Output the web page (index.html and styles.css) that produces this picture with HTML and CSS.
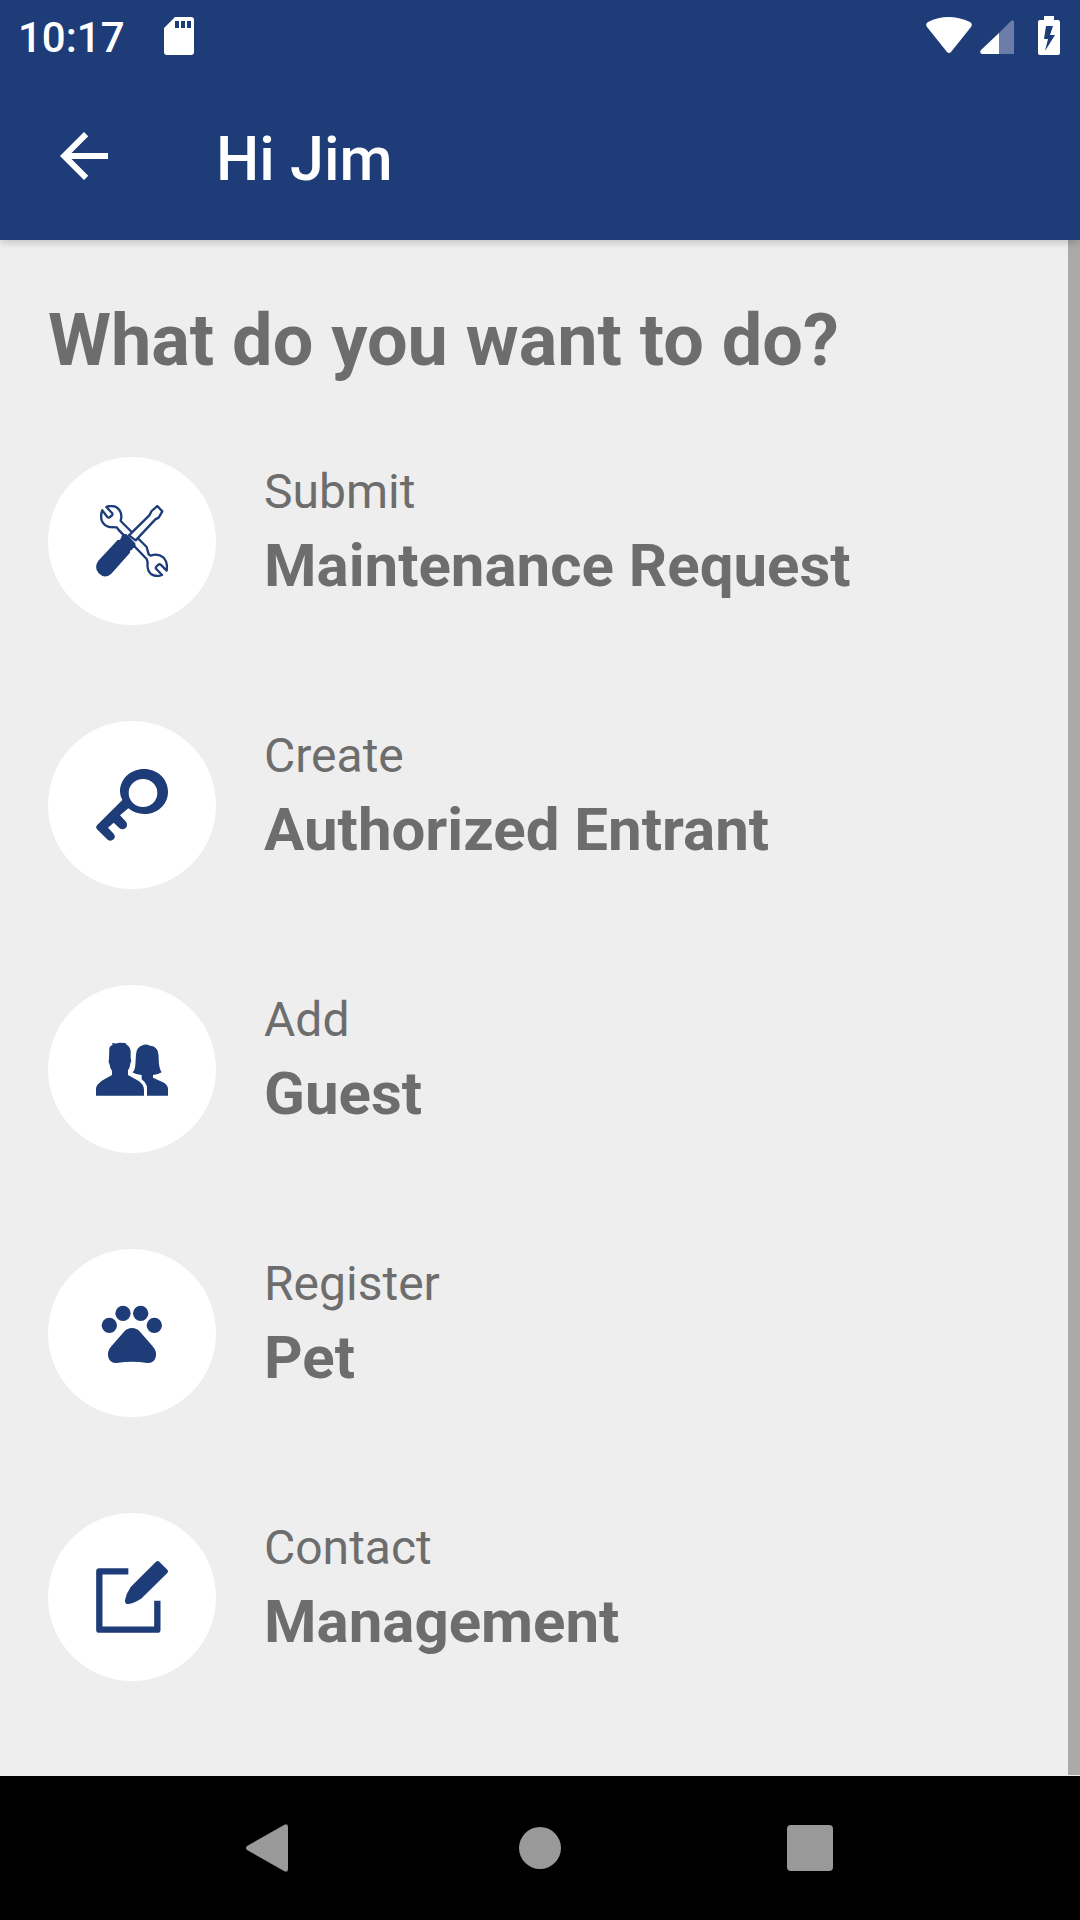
FILE: index.html
```html
<!DOCTYPE html>
<html lang="en">
<head>
<meta charset="utf-8">
<meta name="viewport" content="width=device-width, initial-scale=1">
<title>Hi Jim</title>
<link rel="stylesheet" href="styles.css">
</head>
<body>
<div class="status-bar">
  <time class="clock">10:17</time>
  <svg class="sd-card" width="32" height="40" viewBox="0 0 32 40" aria-hidden="true"><path fill="#fff" fill-rule="evenodd" d="M12 1H28Q31 1 31 4V36Q31 39 28 39H4Q1 39 1 36V12ZM12 5V12H16V5ZM18 5V12H22V5ZM24 5V12H28V5Z"/></svg>
  <div class="status-icons">
    <svg width="46" height="40" viewBox="0 0 46 40" aria-hidden="true"><path fill="#fff" d="M1 11Q-1 8 2 6Q22-4 44 6Q47 8 45 11L25 36Q23 38 21 36Z"/></svg>
    <svg class="signal" width="34" height="40" viewBox="0 0 34 40" aria-hidden="true"><path fill="#fff" d="M19 17V38H2Q-1 37 1 34Z"/><path fill="#6b7da8" d="M19 17L31 5Q34 3 34 6V38H19Z"/></svg>
    <svg class="battery" width="22" height="40" viewBox="0 0 22 40" aria-hidden="true"><path fill="#fff" fill-rule="evenodd" d="M6 0H16V4H20Q22 4 22 6V37Q22 39 20 39H2Q0 39 0 37V6Q0 4 2 4H6ZM8 10L6 23H10L7 35L17 19H12L15 10Z"/></svg>
  </div>
</div>
<header class="app-bar">
  <button class="back" type="button" aria-label="Back"><svg width="72" height="72" viewBox="0 0 24 24" aria-hidden="true"><path fill="#fff" d="M20 11H7.83l5.59-5.59L12 4l-8 8 8 8 1.41-1.41L7.83 13H20v-2z"/></svg></button>
  <h1 class="app-title">Hi Jim</h1>
</header>
<main class="content">
  <h2 class="question">What do you want to do?</h2>
  <nav class="actions" aria-label="Actions">
    <a class="action" href="#maintenance">
      <span class="disc"><svg class="icon" viewBox="0 0 216 216" aria-hidden="true">
        <g fill="#fff" stroke="#1e3c78" stroke-width="7" stroke-linejoin="round">
          <path d="M19 16L34 36Q38 40 42 36L48 31Q51 28 48 24L31 6Q45 0 60 6Q77 17 76 37L74 48L152 126L158 148L164 152Q186 144 203 158Q216 173 212 197L194 179Q190 176 186 180L181 185Q178 189 181 192L198 210Q180 217 166 208Q152 197 155 173L152 162L70 77L62 67L41 66Q24 63 17 46Q13 30 19 16Z"/>
          <path d="M99 91L160 31L167 18L184 3L199 19L188 38L178 43L119 106Z"/>
        </g>
        <path fill="#1e3c78" d="M79 88L91 87L118 115L119 128L111 129L108 135L103 136L102 143L46 206Q27 223 8 205Q-7 187 7 167L65 105L72 104L75 99Z"/>
      </svg></span>
      <span class="label"><span class="verb">Submit</span><strong class="subject">Maintenance Request</strong></span>
    </a>
    <a class="action" href="#entrant">
      <span class="disc"><svg class="icon" viewBox="0 0 216 216" aria-hidden="true"><path fill="#1e3c78" fill-rule="evenodd" d="M144 0C184 0 216 29 216 68S184 135 144 135Q118 135 97 118L72 139L90 158Q97 168 89 177Q80 185 70 177L53 161L36 176L53 194Q60 203 53 211Q44 219 35 212L3 181Q-2 175 3 169L79 93Q72 80 72 68C72 29 104 0 144 0ZM141 30A43 42 0 1 0 141 114A43 42 0 1 0 141 30Z"/></svg></span>
      <span class="label"><span class="verb">Create</span><strong class="subject">Authorized Entrant</strong></span>
    </a>
    <a class="action" href="#guest">
      <span class="disc"><svg class="icon" viewBox="0 0 216 216" aria-hidden="true"><g fill="#1e3c78"><path d="M0 188V168Q0 155 20 142L48 126V113Q42 107 41 95Q36 85 39 77L40 45Q42 38 50 36L48 30Q60 33 70 29L88 30L92 35Q103 42 104 55V75Q108 85 103 92Q101 106 96 112V126L128 144Q144 155 144 170V188Z"/><path d="M153 188V160Q148 146 137 139V126Q121 126 109 118Q117 112 118 95L120 65Q121 42 140 37Q150 32 162 38Q173 37 181 47Q188 55 188 75Q188 105 197 118Q184 126 171 126V134L204 149Q216 157 216 168V188Z"/></g></svg></span>
      <span class="label"><span class="verb">Add</span><strong class="subject">Guest</strong></span>
    </a>
    <a class="action" href="#pet">
      <span class="disc"><svg class="icon" viewBox="0 0 216 216" aria-hidden="true"><g fill="#1e3c78"><circle cx="40" cy="85" r="23"/><circle cx="81" cy="49" r="23"/><circle cx="134" cy="49" r="23"/><circle cx="175" cy="85" r="23"/><path d="M108 93Q122 93 132 104L170 148Q182 162 180 176Q177 198 154 198Q108 190 62 198Q39 198 36 176Q34 162 46 148L84 104Q94 93 108 93Z"/></g></svg></span>
      <span class="label"><span class="verb">Register</span><strong class="subject">Pet</strong></span>
    </a>
    <a class="action" href="#management">
      <span class="disc"><svg class="icon" viewBox="0 0 216 216" aria-hidden="true"><path fill="none" stroke="#1e3c78" stroke-width="19" stroke-linejoin="round" d="M97 31H10V206H184V119"/><path fill="#1e3c78" d="M180 2Q185-2 190 2L214 26Q218 31 214 36L137 112Q118 126 98 129Q86 130 87 118Q90 98 104 78Z"/></svg></span>
      <span class="label"><span class="verb">Contact</span><strong class="subject">Management</strong></span>
    </a>
  </nav>
  <div class="scroll-thumb"></div>
</main>
<footer class="system-nav">
  <button class="system-key" type="button" aria-label="Back"><svg width="48" height="48" viewBox="0 0 48 48" aria-hidden="true"><path fill="#999" d="M1 26Q-1 24 1 22L38 1Q42-1 42 3V45Q42 49 38 47Z"/></svg></button>
  <button class="system-key" type="button" aria-label="Home"><svg width="48" height="48" viewBox="0 0 48 48" aria-hidden="true"><circle cx="24" cy="24" r="21" fill="#999"/></svg></button>
  <button class="system-key" type="button" aria-label="Recent apps"><svg width="48" height="48" viewBox="0 0 48 48" aria-hidden="true"><rect x="1" y="1" width="46" height="46" rx="4" fill="#999"/></svg></button>
</footer>
</body>
</html>
```
FILE: styles.css
```css
* { box-sizing: border-box; }

body {
  margin: 0;
  min-height: 100vh;
  display: flex;
  flex-direction: column;
  background: #eee;
  color: #6d6d6d;
  font-family: Roboto, "Liberation Sans", sans-serif;
}

button {
  padding: 0;
  border: 0;
  background: none;
  cursor: pointer;
}

svg { display: block; }

.status-bar {
  position: relative;
  z-index: 2;
  display: flex;
  align-items: center;
  height: 72px;
  padding: 0 20px 0 18px;
  background: #1e3c78;
  color: #fff;
}

.clock {
  padding-top: 4px;
  font-size: 42px;
  font-weight: 500;
  line-height: 48px;
}

.sd-card { margin-left: 38px; }

.status-icons {
  display: flex;
  margin-left: auto;
}

.signal { margin-left: 8px; }
.battery { margin-left: 24px; }

.app-bar {
  position: relative;
  z-index: 1;
  display: flex;
  align-items: center;
  gap: 96px;
  height: 168px;
  padding: 0 48px;
  background: #1e3c78;
  color: #fff;
  box-shadow: 0 2px 8px rgba(0, 0, 0, 0.2);
}

.app-title {
  margin: 0;
  padding-top: 5px;
  font-size: 61px;
  font-weight: 500;
  line-height: 72px;
}

.content {
  position: relative;
  flex: 1;
  padding: 48px;
}

.question {
  margin: 0 0 63px;
  font-size: 72px;
  font-weight: 700;
  line-height: 106px;
}

.actions {
  display: grid;
  gap: 96px;
}

.action {
  display: flex;
  gap: 48px;
  color: inherit;
  text-decoration: none;
}

.disc {
  display: grid;
  place-items: center;
  flex: none;
  width: 168px;
  height: 168px;
  border-radius: 50%;
  background: #fff;
}

.icon {
  width: 72px;
  height: 72px;
}

.label {
  display: flex;
  flex-direction: column;
  gap: 11px;
  padding-top: 7px;
}

.verb {
  font-size: 48px;
  line-height: 56px;
}

.subject {
  font-size: 60px;
  font-weight: 700;
  line-height: 70px;
}

.scroll-thumb {
  position: absolute;
  top: 0;
  right: 0;
  bottom: 1px;
  width: 12px;
  background: #aaa;
}

.system-nav {
  display: flex;
  justify-content: center;
  height: 144px;
  background: #000;
}

.system-key {
  display: grid;
  place-items: center;
  width: 25%;
}
```
